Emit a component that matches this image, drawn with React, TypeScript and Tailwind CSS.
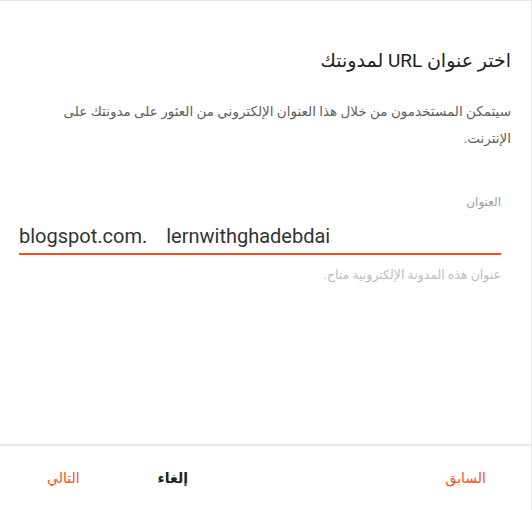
import React from "react";

export default function App() {
  const font = { fontFamily: "Roboto, 'DejaVu Sans', sans-serif" };
  return (
    <div
      dir="rtl"
      style={font}
      className="w-[532px] h-[510px] bg-white border-t border-r border-[#e3e6e8] flex flex-col overflow-hidden"
    >
      <div className="flex-1 flex flex-col pr-[20px] pl-[19px]">
        <h1 className="mt-[47px] text-[19px] leading-[26px] text-[#212121]">
          اختر عنوان URL لمدونتك
        </h1>
        <p className="mt-[24px] text-[13.5px] leading-[27px] text-[#616161]">
          سيتمكن المستخدمون من خلال هذا العنوان الإلكتروني من العثور على مدونتك على الإنترنت.
        </p>
        <div className="mr-[10px]">
          <div className="mt-[42px] text-[12px] leading-[16px] text-[#9e9e9e]">العنوان</div>
          <div
            dir="ltr"
            className="mt-[12px] flex items-end text-[20px] leading-[28px] text-[#333] pb-[3px] border-b-2 border-[#f4511e]"
          >
            <span>blogspot.com.</span>
            <span className="ml-[19px]">lernwithghadebdai</span>
          </div>
          <div className="mt-[12px] text-[12.5px] leading-[16px] text-[#bdbdbd]">
            عنوان هذه المدونة الإلكترونية متاح.
          </div>
        </div>
      </div>
      <div className="h-[66px] border-t-2 border-[#e3e6e8] flex items-center text-[14px]">
        <button className="mr-[45px] text-[#f4511e]">السابق</button>
        <div className="flex-1" />
        <button className="ml-[78px] font-bold text-[#212121]">إلغاء</button>
        <button className="ml-[47px] text-[#f4511e]">التالي</button>
      </div>
    </div>
  );
}
